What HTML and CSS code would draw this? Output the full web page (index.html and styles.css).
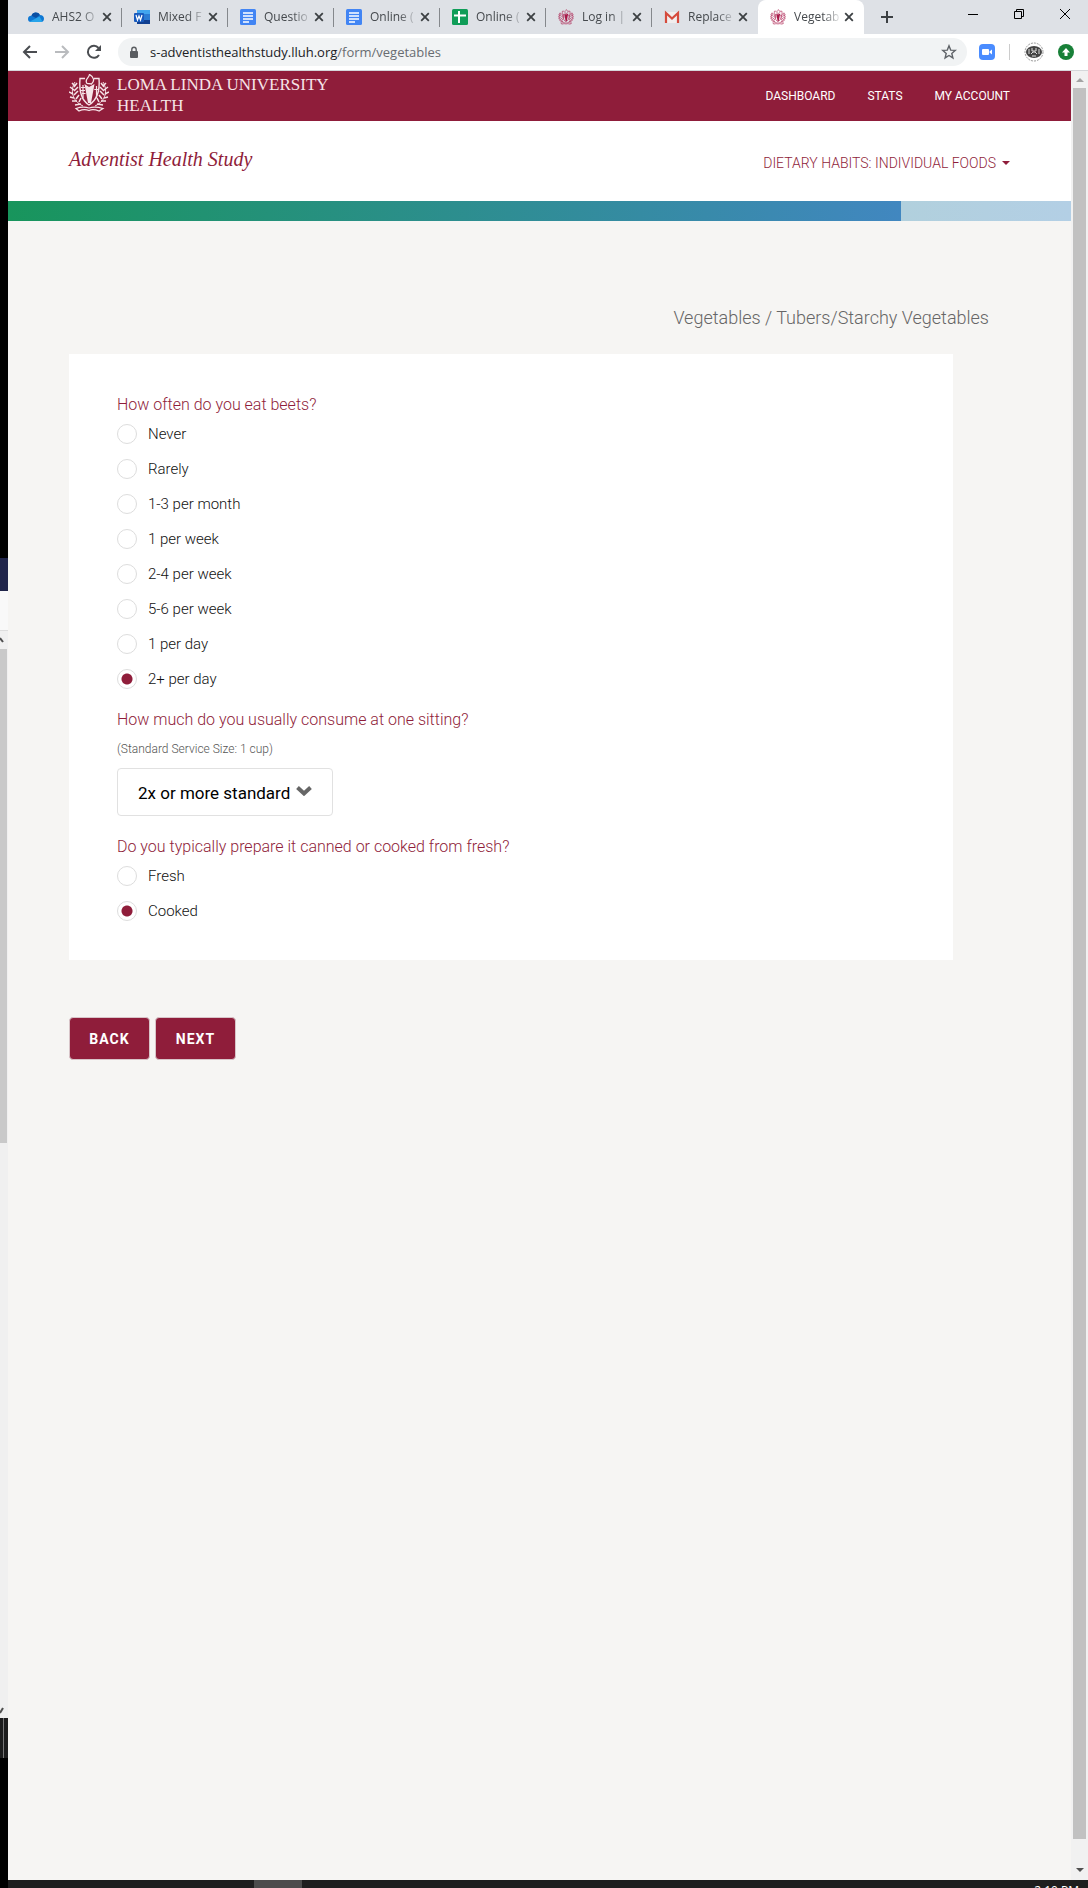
FILE: index.html
```html
<!DOCTYPE html>
<html lang="en">
<head>
  <meta charset="UTF-8">
  <title>Vegetables | Adventist Health Study</title>
  <link rel="stylesheet" href="styles.css">
</head>
<body>

  <!-- shared icons -->
  <svg class="defs" aria-hidden="true">
    <symbol id="i-close" viewBox="0 0 10 10"><path d="M1.2 1.2l7.6 7.6M8.8 1.2L1.2 8.8" fill="none" stroke="#3c4043" stroke-width="1.8"/></symbol>
    <symbol id="i-doc" viewBox="0 0 16 16"><rect width="16" height="16" rx="1.5" fill="#4285f4"/><path d="M3 4h10M3 7h10M3 10h10M3 13h6" stroke="#fff" stroke-width="1.4"/></symbol>
    <symbol id="i-crest" viewBox="0 0 40 38">
      <g fill="none" stroke="currentColor">
        <path d="M16 4.500H11C10 16 12 26 20 31C28 26 31 16 30 4.500H25" stroke-width="1.400"/>
        <path d="M6 8C1 16 3 27 14 32M34 8C39 16 37 27 26 32" stroke-width="1"/>
        <path d="M6 12L3 9M5 16L1 13M4 20L0 18M5 24L1 23M8 27L3 27M12 30L6 31M5 13L8 9M5 17L9 13M5 21L9 17M7 25L10 21M10 28L12 24" stroke-width="1.500"/>
        <path d="M34 12L37 9M35 16L39 13M36 20L40 18M35 24L39 23M32 27L37 27M28 30L34 31M35 13L32 9M35 17L31 13M35 21L31 17M33 25L30 21M30 28L28 24" stroke-width="1.500"/>
        <path d="M27.500 12V24M25.300 15.500H29.500" stroke-width="1.200"/>
        <path d="M14 11V24M12 13.500H16M12 16.500H16M13 19.500H16.500" stroke-width="1.200"/>
        <path d="M7 34.500Q14 32 20 34Q26 32 34 34.500L30 37Q24 34.500 20 36.500Q15 34.500 10 37Z" stroke-width="1.300"/>
      </g>
      <path d="M15.500 10L20 13L25.500 10L22 29H19Z" fill="currentColor"/>
      <path d="M18 9.500C15 5 20 4.500 20.500 0.500C25 3 26 7 22.500 10Z" fill="none" stroke="currentColor" stroke-width="1.300"/>
    </symbol>
  </svg>

  <div class="behind" aria-hidden="true">
    <div class="behind-navy"></div>
    <div class="behind-panel"></div>
    <div class="behind-scroll">
      <svg width="8" height="18"><path d="M0 7L3 11" stroke="#505050" stroke-width="2"/></svg>
      <div class="behind-thumb"></div>
      <svg width="8" height="15"><path d="M0 10L3 5" stroke="#505050" stroke-width="2"/></svg>
    </div>
    <div class="behind-bar"></div>
  </div>

  <div class="window">
    <div class="tabs">
      <div class="tab">
        <svg class="favicon" viewBox="0 0 16 16"><path d="M0 10C0 7.500 2 6.500 3.500 6.800C4.500 3 10 2.400 11.800 6C14.500 6 16 7.600 16 9.800C16 12 14.500 13 13 13H3C1 13 0 11.700 0 10Z" fill="#0f78d4"/><path d="M3.500 6.800C4.500 3 10 2.400 11.800 6L8 9Z" fill="#0a4fa3"/><path d="M2 12.600L11.500 7.500L14.500 12.700L13 13H3Z" fill="#27a4ea"/></svg>
        <span class="tab-title">AHS2 O</span>
        <button class="tab-close" aria-label="Close tab"><svg><use href="#i-close"/></svg></button>
      </div>
      <div class="tab">
        <svg class="favicon" viewBox="0 0 16 16"><rect x="3" y="1" width="13" height="14" rx="1" fill="#2b7cd3"/><path d="M3 1h13v4H3z" fill="#41a5ee"/><path d="M3 11h13v4H3z" fill="#103f91"/><rect y="4" width="10" height="9" rx="1" fill="#185abd"/><path d="M2 6L3.500 11L5 7L6.500 11L8 6" fill="none" stroke="#fff" stroke-width="1.200"/></svg>
        <span class="tab-title">Mixed F</span>
        <button class="tab-close" aria-label="Close tab"><svg><use href="#i-close"/></svg></button>
      </div>
      <div class="tab">
        <svg class="favicon"><use href="#i-doc"/></svg>
        <span class="tab-title">Questio</span>
        <button class="tab-close" aria-label="Close tab"><svg><use href="#i-close"/></svg></button>
      </div>
      <div class="tab">
        <svg class="favicon"><use href="#i-doc"/></svg>
        <span class="tab-title">Online (</span>
        <button class="tab-close" aria-label="Close tab"><svg><use href="#i-close"/></svg></button>
      </div>
      <div class="tab">
        <svg class="favicon" viewBox="0 0 16 16"><rect width="16" height="16" rx="1.500" fill="#0f9d58"/><path d="M2 6.500h12M7 2v12" stroke="#fff" stroke-width="2"/></svg>
        <span class="tab-title">Online (</span>
        <button class="tab-close" aria-label="Close tab"><svg><use href="#i-close"/></svg></button>
      </div>
      <div class="tab">
        <svg class="favicon crest"><use href="#i-crest"/></svg>
        <span class="tab-title">Log in |</span>
        <button class="tab-close" aria-label="Close tab"><svg><use href="#i-close"/></svg></button>
      </div>
      <div class="tab">
        <svg class="favicon" viewBox="0 0 16 16"><path d="M1 3h14v11H1z" fill="#f1eeee"/><path d="M2 14V4L8 9.500L14 4V14" fill="none" stroke="#d54b3d" stroke-width="2.200"/></svg>
        <span class="tab-title">Replace</span>
        <button class="tab-close" aria-label="Close tab"><svg><use href="#i-close"/></svg></button>
      </div>
      <div class="tab active">
        <svg class="favicon crest"><use href="#i-crest"/></svg>
        <span class="tab-title">Vegetab</span>
        <button class="tab-close" aria-label="Close tab"><svg><use href="#i-close"/></svg></button>
      </div>
      <button class="new-tab" aria-label="New tab"><svg width="12" height="12"><path d="M6 0v12M0 6h12" stroke="#3c4043" stroke-width="2"/></svg></button>
      <div class="win-controls">
        <button aria-label="Minimize"><svg width="10" height="10"><path d="M0 5.500h10" stroke="#000"/></svg></button>
        <button aria-label="Restore"><svg width="10" height="10" fill="none" stroke="#000"><path d="M.5 2.500h7v7h-7zM2.500 2.500v-2h7v7h-2"/></svg></button>
        <button aria-label="Close"><svg width="10" height="10"><path d="M0 0l10 10M10 0L0 10" stroke="#000"/></svg></button>
      </div>
    </div>

    <div class="toolbar">
      <button aria-label="Back"><svg width="16" height="16" fill="none" stroke="#4a4d51" stroke-width="2"><path d="M15 8H3M8 2L2 8l6 6"/></svg></button>
      <button aria-label="Forward"><svg width="16" height="16" fill="none" stroke="#b9bbbe" stroke-width="2"><path d="M1 8h12M8 2l6 6l-6 6"/></svg></button>
      <button aria-label="Reload"><svg width="16" height="16"><path d="M13 11A6 6 0 1 1 12.500 4" fill="none" stroke="#4a4d51" stroke-width="2"/><path d="M15 1v6H9z" fill="#4a4d51"/></svg></button>
      <div class="omnibox">
        <svg width="10" height="13"><rect x="1" y="5" width="8" height="7" rx="1" fill="#5a5d61"/><path d="M2.800 5V3.500a2.200 2.200 0 0 1 4.400 0V5" fill="none" stroke="#5a5d61" stroke-width="1.400"/></svg>
        <span class="url">s-adventisthealthstudy.lluh.org<span>/form/vegetables</span></span>
        <svg width="16" height="16" viewBox="0 0 16 16"><path d="M8 1.800l1.700 4.300l4.600.3l-3.500 3l1.100 4.500L8 11.500l-3.900 2.400l1.100-4.500l-3.500-3l4.600-.3z" fill="none" stroke="#5f6368" stroke-width="1.400"/></svg>
      </div>
      <div class="extensions">
        <svg width="16" height="16"><rect width="16" height="16" rx="4" fill="#4a8cff"/><rect x="3" y="5" width="7" height="6" rx="1" fill="#fff"/><path d="M10.500 7.500L13 5.500v5L10.500 8.500z" fill="#fff"/></svg>
        <span class="divider"></span>
        <svg width="20" height="20" viewBox="0 0 20 20" fill="none"><circle cx="10" cy="10" r="9" stroke="#999" stroke-dasharray="2 1"/><ellipse cx="10" cy="10" rx="8" ry="6" fill="#444"/><path d="M5 7v5M8 6v3h4V6M15 7v5M7 12l2-2h2l2 2M8 14h4" stroke="#ddd"/></svg>
        <svg width="16" height="16"><circle cx="8" cy="8" r="8" fill="#188038"/><path d="M8 4L12 8.500H9.500V12h-3V8.500H4z" fill="#fff"/></svg>
      </div>
    </div>

    <div class="viewport">
      <div class="page">
        <header class="site-header">
          <a class="brand" href="#">
            <svg width="40" height="38"><use href="#i-crest"/></svg>
            <span>LOMA LINDA UNIVERSITY<br>HEALTH</span>
          </a>
          <nav>
            <a href="#">DASHBOARD</a>
            <a href="#">STATS</a>
            <a href="#">MY ACCOUNT</a>
          </nav>
        </header>

        <div class="sub-header">
          <h1>Adventist Health Study</h1>
          <button class="section-menu">DIETARY HABITS: INDIVIDUAL FOODS <span class="caret"></span></button>
        </div>

        <div class="progress"><div class="progress-bar" style="width: 84%"></div></div>

        <main>
          <p class="breadcrumb">Vegetables / Tubers/Starchy Vegetables</p>

          <form>
            <div class="card">
              <fieldset>
                <legend>How often do you eat beets?</legend>
                <label><input type="radio" name="often">Never</label>
                <label><input type="radio" name="often">Rarely</label>
                <label><input type="radio" name="often">1-3 per month</label>
                <label><input type="radio" name="often">1 per week</label>
                <label><input type="radio" name="often">2-4 per week</label>
                <label><input type="radio" name="often">5-6 per week</label>
                <label><input type="radio" name="often">1 per day</label>
                <label><input type="radio" name="often" checked>2+ per day</label>
              </fieldset>

              <div class="question">
                <label class="question-title" for="amount">How much do you usually consume at one sitting?</label>
                <p class="hint">(Standard Service Size: 1 cup)</p>
                <div class="select">
                  <select id="amount">
                    <option>2x or more standard</option>
                  </select>
                  <svg width="16" height="10"><path d="M1.500 1.500L8 7.500l6.500-6" fill="none" stroke="#666" stroke-width="4"/></svg>
                </div>
              </div>

              <fieldset>
                <legend>Do you typically prepare it canned or cooked from fresh?</legend>
                <label><input type="radio" name="prep">Fresh</label>
                <label><input type="radio" name="prep" checked>Cooked</label>
              </fieldset>
            </div>

            <div class="actions">
              <button type="button">BACK</button>
              <button type="button">NEXT</button>
            </div>
          </form>
        </main>
      </div>

      <div class="scrollbar" aria-hidden="true">
        <svg width="8" height="5"><path d="M0 4l4-4l4 4z" fill="#a3a3a3"/></svg>
        <div class="thumb"></div>
        <svg width="8" height="5"><path d="M0 0h8l-4 4z" fill="#505050"/></svg>
      </div>
    </div>

    <div class="taskbar">
      <div class="task"></div>
      <span class="clock">2:10 PM</span>
    </div>
  </div>

</body>
</html>
```
FILE: styles.css
```css
* {
  box-sizing: border-box;
}

body {
  margin: 0;
  display: flex;
  min-height: 100vh;
  background: #000;
  font-family: Roboto, "Liberation Sans", sans-serif;
}

button {
  border: none;
  background: none;
  padding: 0;
  font-family: inherit;
  cursor: pointer;
}

svg {
  display: block;
  flex: none;
}

.defs {
  position: absolute;
  width: 0;
  height: 0;
}

/* strip of the windows behind */
.behind {
  width: 8px;
  flex: none;
  padding-top: 558px;
}

.behind-navy {
  height: 33px;
  background: #20254a;
}

.behind-panel {
  height: 40px;
  background: #f9f9f9;
  border-bottom: 1px solid #ddd;
}

.behind-scroll {
  background: #f0f0f0;
  height: 1087px;
  display: flex;
  flex-direction: column;
}

.behind-thumb {
  width: 7px;
  height: 494px;
  background: #c9c9c9;
  margin-bottom: auto;
}

.behind-bar {
  height: 40px;
  background: #1c1c1c;
  border-right: 4px solid #1c1c1c;
  box-shadow: inset -1px 0 #777;
}

/* browser */
.window {
  flex: 1;
  min-width: 0;
  display: flex;
  flex-direction: column;
}

.tabs {
  display: flex;
  height: 34px;
  padding-left: 8px;
  background: #dee1e6;
}

.tab {
  display: flex;
  align-items: center;
  width: 106px;
  padding: 0 10px 0 12px;
  background: linear-gradient(#85888c, #85888c) right 8px / 1px 19px no-repeat;
}

.tab:nth-child(7) {
  background: none;
}

.tab.active {
  background: #fff;
  border-radius: 8px 8px 0 0;
}

.favicon {
  width: 16px;
  height: 16px;
}

.crest {
  color: #a81848;
}

.tab-title {
  width: 48px;
  margin-left: 8px;
  white-space: nowrap;
  font: 12px/18px "Open Sans", sans-serif;
  color: #45494d;
  -webkit-mask-image: linear-gradient(to right, #000 60%, transparent);
  mask-image: linear-gradient(to right, #000 60%, transparent);
}

.tab-close {
  margin-left: auto;
}

.tab-close svg {
  width: 10px;
  height: 10px;
}

.new-tab {
  width: 44px;
  padding: 0 17px;
}

.win-controls {
  display: flex;
  margin-left: auto;
}

.win-controls button {
  width: 46px;
  height: 28px;
  display: flex;
  align-items: center;
  justify-content: center;
}

.toolbar {
  display: flex;
  align-items: center;
  height: 37px;
  padding: 0 14px;
  background: #fff;
  border-bottom: 1px solid #d5d7da;
}

.toolbar > button {
  margin-right: 16px;
}

.omnibox {
  flex: 1;
  display: flex;
  align-items: center;
  height: 28px;
  padding: 0 10px 0 11px;
  border-radius: 14px;
  background: #f1f3f4;
}

.url {
  flex: 1;
  margin-left: 11px;
  font: 13px/20px "Open Sans", sans-serif;
  color: #202124;
}

.url span {
  color: #686c71;
}

.extensions {
  display: flex;
  align-items: center;
  gap: 14px;
  margin-left: 12px;
}

.divider {
  width: 1px;
  height: 16px;
  background: #ccc;
}

.viewport {
  flex: 1;
  display: flex;
}

.page {
  flex: 1;
  background: #f6f5f3;
}

.scrollbar {
  width: 17px;
  padding: 7px 2px;
  background: #f1f1f1;
  display: flex;
  flex-direction: column;
  align-items: center;
  gap: 5px;
}

.thumb {
  flex: 1;
  width: 13px;
  margin-bottom: 24px;
  background: #c1c1c1;
}

/* site */
.site-header {
  display: flex;
  justify-content: space-between;
  height: 50px;
  padding: 3px 61px 0;
  background: #8f1d3a;
  color: #fff;
}

.brand {
  display: flex;
  gap: 8px;
  color: #f6e4e8;
  text-decoration: none;
  font: 17px/21px "Liberation Serif", serif;
}

nav {
  display: flex;
  gap: 32px;
  padding-top: 12px;
}

nav a {
  color: #fff;
  text-decoration: none;
  font-size: 12px;
  line-height: 20px;
}

.sub-header {
  display: flex;
  justify-content: space-between;
  height: 80px;
  padding: 26px 61px 0;
  background: #fff;
}

h1 {
  margin: 0;
  font: italic 20px/24px "Liberation Serif", serif;
  color: #8f1d3a;
}

.section-menu {
  display: flex;
  align-items: center;
  gap: 6px;
  height: 32px;
  font-size: 14px;
  font-weight: 300;
  color: #8f1d3a;
}

.caret {
  border: 4px solid transparent;
  border-top-color: #8f1d3a;
  border-bottom: none;
}

.progress {
  height: 20px;
  background: linear-gradient(to right, #b1d0dd, #b3cfe5) right / 16% 100% no-repeat;
}

.progress-bar {
  height: 20px;
  background: linear-gradient(to right, #18955c, #4187c0);
}

main {
  padding: 85px 61px;
}

.breadcrumb {
  margin: 0 21px 24px;
  text-align: right;
  font-size: 18px;
  line-height: 24px;
  font-weight: 300;
  color: #666;
}

.card {
  margin-right: 57px;
  padding: 40px 48px 32px;
  background: #fff;
}

fieldset {
  border: none;
  margin: 0;
  padding: 0;
}

legend,
.question-title {
  display: block;
  padding: 0;
  font-size: 16px;
  line-height: 22px;
  font-weight: 300;
  color: #8f1d3a;
}

fieldset label {
  display: flex;
  align-items: center;
  gap: 11px;
  height: 35px;
  font-size: 15px;
  font-weight: 300;
  color: #111;
}

input[type="radio"] {
  appearance: none;
  width: 20px;
  height: 20px;
  margin: 0;
  border: 1px solid #ddd;
  border-radius: 50%;
  background: #fff;
}

input[type="radio"]:checked {
  background: radial-gradient(circle, #8f1d3a 5px, transparent 6px);
}

.question {
  padding: 13px 0 20px;
}

.hint {
  margin: 6px 0 7px;
  font-size: 12px;
  line-height: 24px;
  font-weight: 300;
  color: #555;
}

.select {
  position: relative;
  width: 216px;
}

.select select {
  appearance: none;
  width: 100%;
  height: 48px;
  padding: 2px 20px 0;
  border: 1px solid #e1e1e1;
  border-radius: 4px;
  background: #fff;
  font: 17px Roboto, sans-serif;
  color: #000;
}

.select svg {
  position: absolute;
  right: 21px;
  top: 18px;
}

.actions {
  display: flex;
  gap: 5px;
  margin-top: 57px;
}

.actions button {
  width: 81px;
  height: 43px;
  border: 1px solid #d8c4c8;
  border-radius: 4px;
  background: #8f1d3a;
  color: #fff;
  font-size: 14px;
  font-weight: 700;
  letter-spacing: 1px;
}

.taskbar {
  display: flex;
  justify-content: space-between;
  height: 8px;
  padding: 0 9px 0 246px;
  background: #1e1e1e;
  overflow: hidden;
}

.task {
  width: 48px;
  background: #4c4c4c;
}

.clock {
  padding-top: 3px;
  font: 12px/16px "Open Sans", sans-serif;
  color: #fff;
}
```
